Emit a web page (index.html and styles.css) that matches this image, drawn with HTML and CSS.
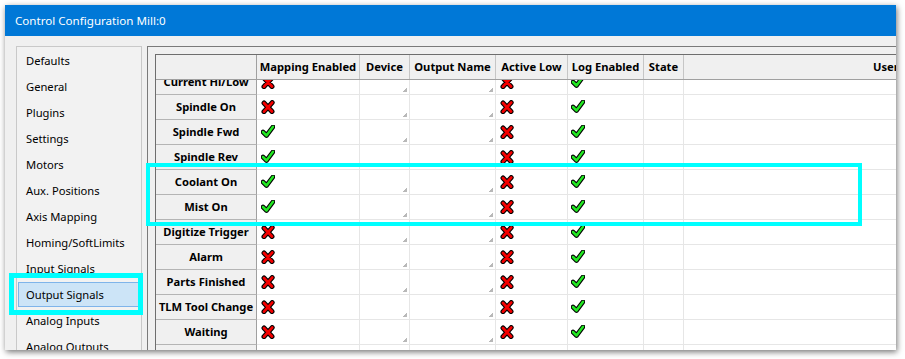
FILE: index.html
```html
<!DOCTYPE html>
<html>
<head>
<meta charset="utf-8">
<link rel="stylesheet" href="styles.css">
</head>
<body>
<svg class="defs" width="0" height="0">
  <defs>
    <symbol id="ic-x" viewBox="0 0 14 14">
      <path d="M3 3 L11 11.5 M11.2 2.6 L3 11.6" fill="none" stroke="#000" stroke-width="5" stroke-linecap="round"/>
      <path d="M3 3 L11 11.5 M11.2 2.6 L3 11.6" fill="none" stroke="#f40000" stroke-width="2.8" stroke-linecap="round"/>
    </symbol>
    <symbol id="ic-ok" viewBox="0 0 14 14">
      <path d="M2 7 L5.5 10.5 L12 1.8" fill="none" stroke="#000" stroke-width="4.6" stroke-linejoin="round" stroke-linecap="round"/>
      <path d="M2 7 L5.5 10.5 L12 1.8" fill="none" stroke="#22e622" stroke-width="2.5" stroke-linejoin="round" stroke-linecap="round"/>
    </symbol>
  </defs>
</svg>
<div class="window">
  <div class="titlebar">Control Configuration Mill:0</div>
  <div class="content">
    <ul class="sidebar">
      <li class="item"><span>Defaults</span></li>
      <li class="item"><span>General</span></li>
      <li class="item"><span>Plugins</span></li>
      <li class="item"><span>Settings</span></li>
      <li class="item"><span>Motors</span></li>
      <li class="item"><span>Aux. Positions</span></li>
      <li class="item"><span>Axis Mapping</span></li>
      <li class="item"><span>Homing/SoftLimits</span></li>
      <li class="item"><span>Input Signals</span></li>
      <li class="item selected"><span>Output Signals</span></li>
      <li class="item"><span>Analog Inputs</span></li>
      <li class="item"><span>Analog Outputs</span></li>
    </ul>
    <div class="panel">
      <div class="grid">
        <div class="row head">
          <div class="hc corner"></div>
          <div class="hc">Mapping Enabled</div>
          <div class="hc">Device</div>
          <div class="hc">Output Name</div>
          <div class="hc">Active Low</div>
          <div class="hc">Log Enabled</div>
          <div class="hc">State</div>
          <div class="hc user">User</div>
        </div>
        <div class="body">
          <div class="rows">
            <div class="row"><div class="rh">Current Hi/Low</div><div class="c"><svg class="ic"><use href="#ic-x"/></svg></div><div class="c grip"></div><div class="c grip"></div><div class="c"><svg class="ic"><use href="#ic-x"/></svg></div><div class="c log"><svg class="ic"><use href="#ic-ok"/></svg></div><div class="c"></div><div class="c"></div></div>
            <div class="row"><div class="rh">Spindle On</div><div class="c"><svg class="ic"><use href="#ic-x"/></svg></div><div class="c grip"></div><div class="c grip"></div><div class="c"><svg class="ic"><use href="#ic-x"/></svg></div><div class="c log"><svg class="ic"><use href="#ic-ok"/></svg></div><div class="c"></div><div class="c"></div></div>
            <div class="row"><div class="rh">Spindle Fwd</div><div class="c"><svg class="ic"><use href="#ic-ok"/></svg></div><div class="c grip"></div><div class="c grip"></div><div class="c"><svg class="ic"><use href="#ic-x"/></svg></div><div class="c log"><svg class="ic"><use href="#ic-ok"/></svg></div><div class="c"></div><div class="c"></div></div>
            <div class="row"><div class="rh">Spindle Rev</div><div class="c"><svg class="ic"><use href="#ic-ok"/></svg></div><div class="c grip"></div><div class="c grip"></div><div class="c"><svg class="ic"><use href="#ic-x"/></svg></div><div class="c log"><svg class="ic"><use href="#ic-ok"/></svg></div><div class="c"></div><div class="c"></div></div>
            <div class="row"><div class="rh">Coolant On</div><div class="c"><svg class="ic"><use href="#ic-ok"/></svg></div><div class="c grip"></div><div class="c grip"></div><div class="c"><svg class="ic"><use href="#ic-x"/></svg></div><div class="c log"><svg class="ic"><use href="#ic-ok"/></svg></div><div class="c"></div><div class="c"></div></div>
            <div class="row"><div class="rh">Mist On</div><div class="c"><svg class="ic"><use href="#ic-ok"/></svg></div><div class="c grip"></div><div class="c grip"></div><div class="c"><svg class="ic"><use href="#ic-x"/></svg></div><div class="c log"><svg class="ic"><use href="#ic-ok"/></svg></div><div class="c"></div><div class="c"></div></div>
            <div class="row"><div class="rh">Digitize Trigger</div><div class="c"><svg class="ic"><use href="#ic-x"/></svg></div><div class="c grip"></div><div class="c grip"></div><div class="c"><svg class="ic"><use href="#ic-x"/></svg></div><div class="c log"><svg class="ic"><use href="#ic-ok"/></svg></div><div class="c"></div><div class="c"></div></div>
            <div class="row"><div class="rh">Alarm</div><div class="c"><svg class="ic"><use href="#ic-x"/></svg></div><div class="c grip"></div><div class="c grip"></div><div class="c"><svg class="ic"><use href="#ic-x"/></svg></div><div class="c log"><svg class="ic"><use href="#ic-ok"/></svg></div><div class="c"></div><div class="c"></div></div>
            <div class="row"><div class="rh">Parts Finished</div><div class="c"><svg class="ic"><use href="#ic-x"/></svg></div><div class="c grip"></div><div class="c grip"></div><div class="c"><svg class="ic"><use href="#ic-x"/></svg></div><div class="c log"><svg class="ic"><use href="#ic-ok"/></svg></div><div class="c"></div><div class="c"></div></div>
            <div class="row"><div class="rh">TLM Tool Change</div><div class="c"><svg class="ic"><use href="#ic-x"/></svg></div><div class="c grip"></div><div class="c grip"></div><div class="c"><svg class="ic"><use href="#ic-x"/></svg></div><div class="c log"><svg class="ic"><use href="#ic-ok"/></svg></div><div class="c"></div><div class="c"></div></div>
            <div class="row"><div class="rh">Waiting</div><div class="c"><svg class="ic"><use href="#ic-x"/></svg></div><div class="c grip"></div><div class="c grip"></div><div class="c"><svg class="ic"><use href="#ic-x"/></svg></div><div class="c log"><svg class="ic"><use href="#ic-ok"/></svg></div><div class="c"></div><div class="c"></div></div>
            <div class="row"><div class="rh">Program Run</div><div class="c"><svg class="ic"><use href="#ic-x"/></svg></div><div class="c grip"></div><div class="c grip"></div><div class="c"><svg class="ic"><use href="#ic-x"/></svg></div><div class="c log"><svg class="ic"><use href="#ic-ok"/></svg></div><div class="c"></div><div class="c"></div></div>
          </div>
        </div>
      </div>
    </div>
  </div>
  <div class="mark mark-side"></div>
  <div class="mark mark-rows"></div>
</div>
</body>
</html>
```

FILE: styles.css
```css
* { box-sizing: border-box; }
html, body { margin: 0; padding: 0; background: #fff; }
body {
  font-family: "Noto Sans", "Open Sans", sans-serif;
  font-size: 11.2px;
  color: #000;
  width: 905px;
  height: 359px;
  overflow: hidden;
  padding: 5px 0 0 5px;
}
.defs { position: absolute; width: 0; height: 0; }

.window {
  position: relative;
  width: 891px;
  height: 345px;
  background: #f0f0f0;
  box-shadow: 1px 2px 6px rgba(0,0,0,0.55);
  display: flex;
  flex-direction: column;
}
.titlebar {
  height: 31px;
  flex: none;
  background: #0078d7;
  color: #fff;
  padding-left: 10px;
  line-height: 31px;
  font-size: 11.6px;
}
.content {
  flex: 1;
  display: flex;
  padding: 10px 0 0 11px;
  overflow: hidden;
}
.sidebar {
  list-style: none;
  margin: 0 5px 0 0;
  padding: 0;
  width: 126px;
  flex: none;
  border: 1px solid #c9c9c9;
  border-bottom: none;
  background: #f2f2f2;
  display: flex;
  flex-direction: column;
  overflow: hidden;
}
.item {
  flex: none;
  height: 26px;
  padding: 1px 2px 1px 1px;
}
.item span {
  display: block;
  height: 25px;
  line-height: 24px;
  padding-left: 7px;
  border: 1px solid transparent;
  white-space: nowrap;
}
.item.selected span {
  background: #cce4f7;
  border-color: #7eb4ea;
}

.panel {
  flex: none;
  width: 760px;
  border: 1px solid #7a7a7a;
  border-right: none;
  border-bottom: none;
  padding: 7px 0 0 7px;
  overflow: hidden;
}
.grid {
  border: 1px solid #6e6e6e;
  border-right: none;
  border-bottom: none;
  height: 100%;
  display: flex;
  flex-direction: column;
}
.row {
  display: grid;
  grid-template-columns: 101px 103px 50px 86px 72px 76px 40px 400px;
  height: 25px;
}
.head {
  flex: none;
  background: #f0f0f0;
  border-bottom: 1px solid #a0a0a0;
}
.hc {
  height: 24px;
  line-height: 24px;
  text-align: center;
  font-weight: bold;
  border-right: 1px solid #c6c6c6;
  white-space: nowrap;
  overflow: hidden;
}
.hc.corner { border-right-color: #a0a0a0; }
.hc.user { text-align: left; padding-left: 189px; border-right: none; }

.body {
  flex: 1;
  overflow: hidden;
}
.rows { margin-top: -10px; }
.rh {
  background: #f0f0f0;
  border-right: 1px solid #a0a0a0;
  border-bottom: 1px solid #b4b4b4;
  font-weight: bold;
  text-align: center;
  line-height: 24px;
  white-space: nowrap;
  overflow: hidden;
}
.c {
  background: #fff;
  border-right: 1px solid #e6e6e6;
  border-bottom: 1px solid #e6e6e6;
  padding: 5px 0 0 4px;
}
.c.log { padding-left: 3px; }
.grip {
  background: #fff linear-gradient(135deg, transparent 50%, #b8b8b8 50%) no-repeat right 2px bottom 2px / 4px 4px;
}
.ic { display: block; width: 14px; height: 14px; }

.mark {
  position: absolute;
  border-style: solid;
  border-color: #00ffff;
  pointer-events: none;
}
.mark-side {
  left: 4px;
  top: 268px;
  width: 134px;
  height: 42px;
  border-width: 5px;
}
.mark-rows {
  left: 141px;
  top: 158px;
  width: 716px;
  height: 63px;
  border-width: 4px;
}
```
